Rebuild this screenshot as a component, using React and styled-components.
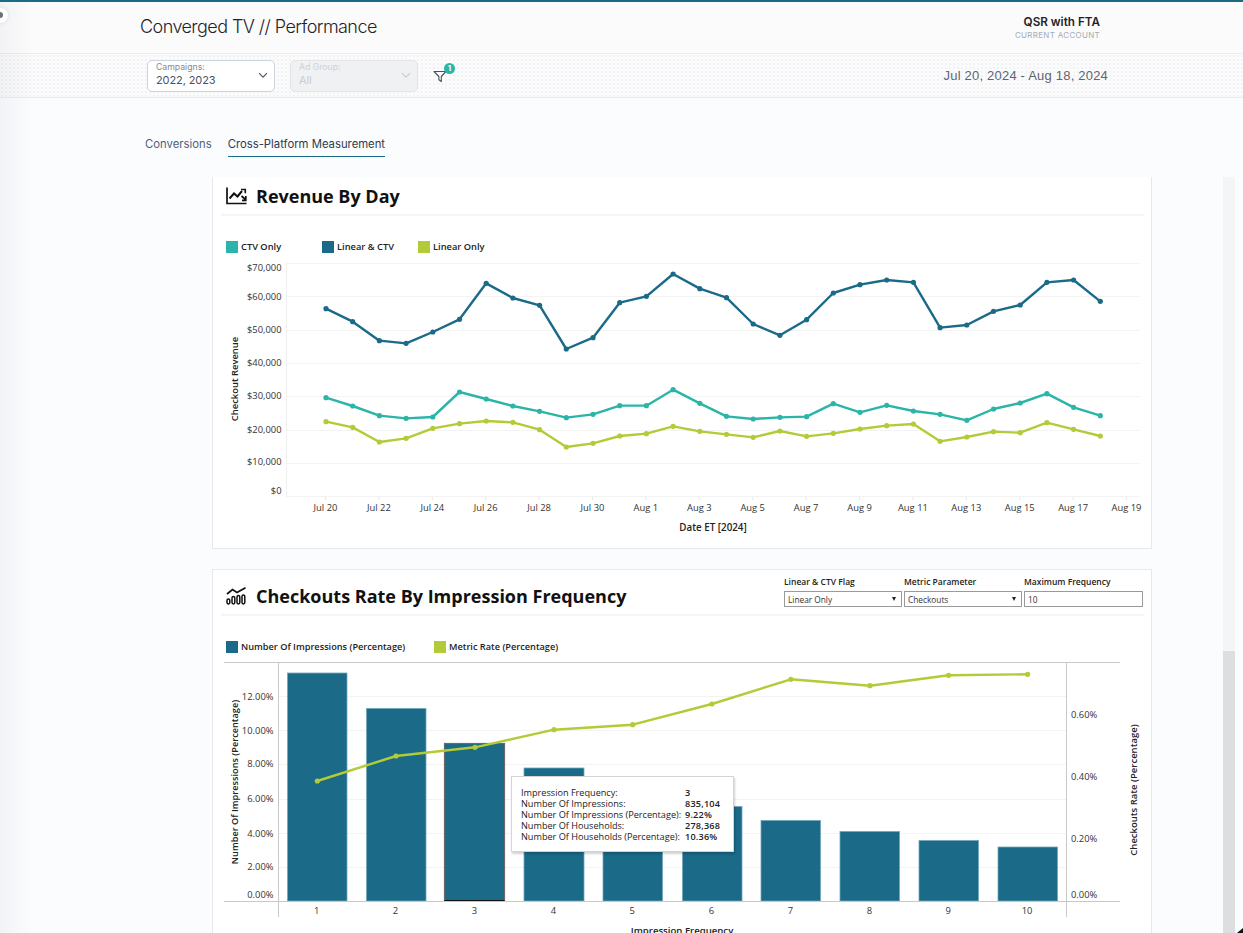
import React from "react";
import styled, { createGlobalStyle } from "styled-components";

const GlobalStyle = createGlobalStyle`
  html, body {
    margin: 0;
    padding: 0;
    height: 100%;
    overflow: hidden;
    background: #fbfcfe;
  }
  * { box-sizing: border-box; }
`;

const TEAL = "#2bb5a8";
const BLUE = "#1a6a88";
const LIME = "#b2cb36";
const CHART_FONT = '"Open Sans", "DejaVu Sans", sans-serif';

const Page = styled.div`
  position: relative;
  width: 1243px;
  height: 933px;
  overflow: hidden;
  display: flex;
  flex-direction: column;
  border-top: 2px solid ${BLUE};
  font-family: Inter, "Noto Sans", sans-serif;
  background: #fbfcfe;
`;

const SideShadow = styled.div`
  position: absolute;
  top: 0;
  bottom: 0;
  left: 0;
  width: 34px;
  background: linear-gradient(to right, rgba(40, 50, 70, 0.045), rgba(40, 50, 70, 0));
  pointer-events: none;
`;

const Knob = styled.div`
  position: absolute;
  left: -7px;
  top: 6px;
  width: 15px;
  height: 15px;
  border-radius: 50%;
  background: #fff;
  box-shadow: 0 0 4px rgba(0, 0, 0, 0.1);
  &::after {
    content: "";
    position: absolute;
    left: 4px;
    top: 4px;
    width: 6px;
    height: 6px;
    border-radius: 50%;
    background: #6b7078;
  }
`;

const Header = styled.header`
  height: 52px;
  flex: none;
  display: flex;
  align-items: center;
  justify-content: space-between;
  padding: 0 143px 0 140px;
  background: #fbfbfc;
  border-bottom: 1px solid #e9ecf0;
`;

const PageTitle = styled.h1`
  margin: 0 0 2px;
  font-size: 18px;
  font-weight: 300;
  letter-spacing: -0.56px;
  color: #1f2328;
`;

const Account = styled.div`
  display: flex;
  flex-direction: column;
  align-items: flex-end;
  margin-top: 1px;
`;

const AccountName = styled.div`
  font-size: 11.7px;
  line-height: 15px;
  font-weight: 600;
  color: #1f2328;
`;

const AccountLabel = styled.div`
  font-size: 8px;
  line-height: 11px;
  letter-spacing: 0.3px;
  color: #a4abb8;
`;

const FilterBar = styled.div`
  height: 44px;
  flex: none;
  display: flex;
  align-items: center;
  padding: 0 135px 0 147px;
  border-bottom: 1px solid #e9ecf0;
  background-color: #fbfbfc;
  background-image: radial-gradient(#f1f2f5 0.7px, transparent 0.8px);
  background-size: 4px 4px;
`;

const Select = styled.div`
  position: relative;
  width: 128px;
  height: 32px;
  margin-right: 15px;
  padding: 1px 8px;
  border-radius: 5px;
  border: 1px solid ${(p) => (p.$disabled ? "#e3e5e9" : "#ccd3dd")};
  background: ${(p) => (p.$disabled ? "#eff1f3" : "#fff")};
  color: ${(p) => (p.$disabled ? "#c8ccd3" : "#4a5266")};
`;

const SelectLabel = styled.div`
  font-size: 8.7px;
  line-height: 11px;
  color: ${(p) => (p.$disabled ? "#cdd1d8" : "#7f8897")};
`;

const SelectValue = styled.div`
  font-size: 11px;
  line-height: 15px;
  letter-spacing: -0.1px;
`;

const Chevron = styled.svg`
  position: absolute;
  right: 6px;
  top: 11px;
`;

const FilterIcon = styled.div`
  position: relative;
  width: 20px;
  height: 20px;
  margin-top: 2px;
`;

const Badge = styled.span`
  position: absolute;
  left: 11px;
  top: -4px;
  width: 11px;
  height: 11px;
  border-radius: 50%;
  background: ${TEAL};
  color: #fff;
  font-size: 8px;
  font-weight: 700;
  line-height: 11px;
  text-align: center;
`;

const DateRange = styled.div`
  margin-left: auto;
  font-family: "Liberation Sans", Arial, sans-serif;
  font-size: 13px;
  letter-spacing: 0.2px;
  color: #5f6570;
`;

const Tabs = styled.nav`
  height: 79px;
  flex: none;
  display: flex;
  gap: 16px;
  padding: 35px 0 0 145px;
`;

const Tab = styled.div`
  height: 24px;
  font-size: 11.3px;
  line-height: 22px;
  color: ${(p) => (p.$active ? "#2f3a4a" : "#4f5f78")};
  border-bottom: ${(p) => (p.$active ? `1px solid ${BLUE}` : "none")};
`;

const Body = styled.main`
  flex: 1;
  min-height: 0;
  display: flex;
  padding-left: 212px;
  overflow: hidden;
`;

const Cards = styled.div`
  width: 940px;
  flex: none;
  display: flex;
  flex-direction: column;
  gap: 20px;
`;

const Card = styled.section`
  flex: none;
  height: ${(p) => p.$height}px;
  background: #fff;
  border: 1px solid #e6e8ec;
  border-top: ${(p) => (p.$cut ? "none" : "1px solid #e6e8ec")};
  font-family: ${CHART_FONT};
`;

const CardHead = styled.div`
  height: ${(p) => p.$height}px;
  margin: 0 7px 0 8px;
  padding: ${(p) => p.$pad || 0}px 0 0 5px;
  display: flex;
  align-items: center;
  gap: 9px;
  border-bottom: 2px solid #f5f5f5;
`;

const CardTitle = styled.h2`
  margin: 0;
  flex: 1;
  font-size: 18px;
  font-weight: 700;
  color: #111;
  white-space: nowrap;
`;

const Params = styled.div`
  display: flex;
  gap: 2px;
  align-self: flex-start;
  margin: -3px 1px 0 0;
`;

const Param = styled.div`
  width: ${(p) => p.$width || 118}px;
`;

const ParamLabel = styled.div`
  font-size: 8.5px;
  line-height: 13px;
  font-weight: 600;
  color: #222;
  white-space: nowrap;
`;

const ParamBox = styled.div`
  height: 16px;
  margin-top: 3px;
  padding: 0 3px;
  display: flex;
  align-items: center;
  justify-content: space-between;
  font-size: 8.3px;
  color: #333;
  border: 1px solid #9a9a9a;
  background: #fff;
`;

const Arrow = styled.span`
  width: 0;
  height: 0;
  margin-right: 2px;
  border-left: 2.5px solid transparent;
  border-right: 2.5px solid transparent;
  border-top: 4px solid #222;
`;

const Legend = styled.div`
  display: flex;
  align-items: center;
  height: 12px;
  margin: ${(p) => p.$top}px 0 0 13px;
`;

const LegendItem = styled.div`
  display: flex;
  align-items: center;
  gap: 3px;
  width: ${(p) => p.$width}px;
  font-size: ${(p) => p.$size || 9.3}px;
  line-height: 11px;
  font-weight: 600;
  color: #222;
  white-space: nowrap;
`;

const Swatch = styled.span`
  width: 12px;
  height: 12px;
  transform: translateY(1px);
  background: ${(p) => p.$color};
`;

const ChartSvg = styled.svg`
  display: block;
  font-family: ${CHART_FONT};
`;

const ChartWrap = styled.div`
  position: relative;
  margin-top: ${(p) => p.$top}px;
`;

const Tooltip = styled.div`
  position: absolute;
  left: 298px;
  top: 116px;
  width: 223px;
  height: 76px;
  padding: 10px 9px;
  display: grid;
  grid-template-columns: 164px 1fr;
  grid-auto-rows: 11px;
  font-size: 9.15px;
  line-height: 11px;
  color: #222;
  background: #fff;
  border: 1px solid #d4d4d4;
  box-shadow: 1px 2px 2px rgba(0, 0, 0, 0.18);
  white-space: nowrap;
`;

const TipValue = styled.span`
  font-weight: 600;
  letter-spacing: 0.2px;
`;

const ScrollTrack = styled.div`
  width: 12px;
  margin-left: 71px;
  flex: none;
  display: flex;
  align-items: flex-end;
  background: #f5f5f5;
`;

const ScrollThumb = styled.div`
  width: 100%;
  height: 282px;
  background: #dedede;
`;

const CursorTip = styled.svg`
  position: absolute;
  right: 0;
  bottom: 0;
`;

const dayX = (i) => 326 + i * 26.7;
const fromZoom = (v) => 230 + v / 3;

const dark = [236, 275, 332, 340, 306, 268, 160, 204, 226, 357, 323, 218, 199, 132, 176, 203, 282, 316, 269, 189, 164, 150, 157, 293, 285, 244, 225, 157, 150, 214];
const teal = [503, 528, 557, 565, 561, 486, 507, 528, 544, 563, 553, 527, 527, 479, 520, 559, 567, 562, 560, 521, 547, 526, 543, 553, 571, 537, 519, 491, 532, 557];
const lime = [575, 592, 636, 625, 595, 581, 573, 577, 599, 651, 640, 618, 611, 589, 604, 613, 622, 603, 619, 610, 597, 587, 582, 634, 621, 605, 608, 578, 598, 618];

const revenueSeries = [
  { color: TEAL, values: teal },
  { color: BLUE, values: dark },
  { color: LIME, values: lime },
];

const revenueTicks = [
  ["$70,000", 268],
  ["$60,000", 297],
  ["$50,000", 330],
  ["$40,000", 363],
  ["$30,000", 396],
  ["$20,000", 430],
  ["$10,000", 462],
  ["$0", 491],
];

const dayLabels = ["Jul 20", "Jul 22", "Jul 24", "Jul 26", "Jul 28", "Jul 30", "Aug 1", "Aug 3", "Aug 5", "Aug 7", "Aug 9", "Aug 11", "Aug 13", "Aug 15", "Aug 17", "Aug 19"];

const revenueGrid = [263.5, 296.5, 330.5, 363.5, 396.5, 430.5, 463.5, 496.5];

const bars = [
  [287.5, 59.5, 673],
  [366.5, 59.5, 708.5],
  [444.5, 60, 743.5],
  [524, 60, 768],
  [603, 59.5, 796],
  [682.5, 59.5, 806.5],
  [761, 59.5, 820.5],
  [840, 59.5, 831.5],
  [919, 59.5, 840.5],
  [998, 59.5, 847],
];

const ratePoints = [
  [317.3, 781],
  [396, 756],
  [475, 747.3],
  [554, 729.7],
  [632.7, 724.7],
  [711.9, 704],
  [790.9, 679.3],
  [869.9, 685.7],
  [948.6, 675.3],
  [1027.6, 674.3],
];

const freqGrid = [696.5, 730.5, 764.5, 799.5, 833.5, 867.5];
const freqLeft = [
  ["12.00%", 697],
  ["10.00%", 731],
  ["8.00%", 764],
  ["6.00%", 799],
  ["4.00%", 834],
  ["2.00%", 867],
  ["0.00%", 895],
];
const freqRight = [
  ["0.60%", 715],
  ["0.40%", 777],
  ["0.20%", 839],
  ["0.00%", 895],
];

const tipRows = [
  ["Impression Frequency:", "3"],
  ["Number Of Impressions:", "835,104"],
  ["Number Of Impressions (Percentage):", "9.22%"],
  ["Number Of Households:", "278,368"],
  ["Number Of Households (Percentage):", "10.36%"],
];

const RevenueIcon = () => (
  <svg width="21" height="18" viewBox="0 0 21 18" fill="none" stroke="#111" strokeWidth="1.7">
    <path d="M1 0.5V16.5H20.5" />
    <path d="M3.5 11.5L8 6.5L11.5 9.5L16 4" strokeWidth="2" />
    <path d="M15 2.5H19.3V6.3" strokeWidth="1.6" />
    <path d="M15.5 9L19.5 12.5M19.8 9V13.4H16" strokeWidth="1.7" />
  </svg>
);

const FrequencyIcon = () => (
  <svg width="21" height="18" viewBox="0 0 21 18" fill="none" stroke="#111">
    <path d="M1 7L6.5 2.5L11 5.5L19.5 0.8" strokeWidth="1.8" />
    <rect x="1" y="12" width="2.8" height="5" rx="1.4" strokeWidth="1.5" />
    <rect x="6" y="9.5" width="2.8" height="7.5" rx="1.4" strokeWidth="1.5" />
    <rect x="11" y="8.5" width="2.8" height="8.5" rx="1.4" strokeWidth="1.5" />
    <rect x="16" y="8" width="2.8" height="9" rx="1.4" strokeWidth="1.5" />
  </svg>
);

const RevenueChart = () => (
  <ChartSvg width="938" height="286" viewBox="213 256 938 286">
    {revenueGrid.map((y) => (
      <line key={y} x1="286" x2="1140" y1={y} y2={y} stroke="#f3f3f3" />
    ))}
    <line x1="286.5" x2="286.5" y1="263" y2="497" stroke="#f0f0f0" />
    {revenueTicks.map(([label, y]) => (
      <text key={label} x="281.5" y={y + 3} textAnchor="end" fontSize="9.4" fill="#333">
        {label}
      </text>
    ))}
    {dayLabels.map((label, i) => (
      <g key={label}>
        <line x1={325.5 + i * 53.4} x2={325.5 + i * 53.4} y1="497" y2="500" stroke="#e8e8e8" />
        <text x={325.5 + i * 53.4} y="511" textAnchor="middle" fontSize="9.4" fill="#333">
          {label}
        </text>
      </g>
    ))}
    <text x="713" y="531" textAnchor="middle" fontSize="9.8" fontWeight="600" fill="#222">
      Date ET [2024]
    </text>
    <text transform="translate(238 379) rotate(-90)" textAnchor="middle" fontSize="9.4" fontWeight="600" fill="#222">
      Checkout Revenue
    </text>
    {revenueSeries.map(({ color, values }) => (
      <g key={color}>
        <polyline
          points={values.map((v, i) => `${dayX(i)},${fromZoom(v)}`).join(" ")}
          fill="none"
          stroke={color}
          strokeWidth="2.4"
          strokeLinejoin="round"
        />
        {values.map((v, i) => (
          <circle key={i} cx={dayX(i)} cy={fromZoom(v)} r="2.6" fill={color} />
        ))}
      </g>
    ))}
  </ChartSvg>
);

const FrequencyChart = () => (
  <ChartSvg width="938" height="280" viewBox="213 660 938 280">
    {freqGrid.map((y) => (
      <line key={y} x1="279" x2="1066" y1={y} y2={y} stroke="#f3f3f3" />
    ))}
    {bars.map(([x, w, y], i) => (
      <rect
        key={x}
        x={x}
        y={y}
        width={w}
        height={901 - y}
        fill={BLUE}
        stroke={i === 2 ? "#6a6a6a" : "#6fa9bb"}
        strokeWidth={i === 2 ? 1.2 : 0.8}
      />
    ))}
    <line x1="444.5" x2="504.5" y1="900.5" y2="900.5" stroke="#111" />
    <line x1="224" x2="1120" y1="662.5" y2="662.5" stroke="#c9c9c9" />
    <line x1="224" x2="1120" y1="901.5" y2="901.5" stroke="#c9c9c9" />
    <line x1="278.5" x2="278.5" y1="662" y2="917" stroke="#c9c9c9" />
    <line x1="1066.5" x2="1066.5" y1="662" y2="917" stroke="#c9c9c9" />
    {freqLeft.map(([label, y]) => (
      <text key={label} x="273.5" y={y + 3} textAnchor="end" fontSize="9.4" fill="#333">
        {label}
      </text>
    ))}
    {freqRight.map(([label, y]) => (
      <text key={label} x="1071" y={y + 3} fontSize="9.4" fill="#333">
        {label}
      </text>
    ))}
    {ratePoints.map(([x], i) => (
      <text key={x} x={x - 0.5} y="914" textAnchor="middle" fontSize="9.4" fill="#333">
        {i + 1}
      </text>
    ))}
    <polyline
      points={ratePoints.map(([x, y]) => `${x},${y}`).join(" ")}
      fill="none"
      stroke={LIME}
      strokeWidth="2.4"
      strokeLinejoin="round"
    />
    {ratePoints.map(([x, y]) => (
      <circle key={x} cx={x} cy={y} r="2.6" fill={LIME} />
    ))}
    <text x="682" y="934" textAnchor="middle" fontSize="9.6" fontWeight="600" fill="#222">
      Impression Frequency
    </text>
    <text transform="translate(238 782) rotate(-90)" textAnchor="middle" fontSize="9.2" fontWeight="600" fill="#222">
      Number Of Impressions (Percentage)
    </text>
    <text transform="translate(1137 790) rotate(-90)" textAnchor="middle" fontSize="9.5" fontWeight="600" fill="#222">
      Checkouts Rate (Percentage)
    </text>
  </ChartSvg>
);

const DownChevron = ({ color }) => (
  <Chevron width="10" height="7" viewBox="0 0 10 7" fill="none" stroke={color} strokeWidth="1.1">
    <path d="M1 1.2L5 5.2L9 1.2" />
  </Chevron>
);

const App = () => {
  return (
    <Page>
      <GlobalStyle />
      <Header>
        <PageTitle>Converged TV // Performance</PageTitle>
        <Account>
          <AccountName>QSR with FTA</AccountName>
          <AccountLabel>CURRENT ACCOUNT</AccountLabel>
        </Account>
      </Header>
      <FilterBar>
        <Select>
          <SelectLabel>Campaigns:</SelectLabel>
          <SelectValue>2022, 2023</SelectValue>
          <DownChevron color="#4a5266" />
        </Select>
        <Select $disabled>
          <SelectLabel $disabled>Ad Group:</SelectLabel>
          <SelectValue>All</SelectValue>
          <DownChevron color="#c8ccd3" />
        </Select>
        <FilterIcon>
          <svg width="14" height="14" viewBox="0 0 14 14" fill="none" stroke="#4a5260" strokeWidth="1.1">
            <path d="M1 2.5H13L8.3 7.5V12.6L5.9 10.8V7.5Z" strokeLinejoin="round" />
          </svg>
          <Badge>1</Badge>
        </FilterIcon>
        <DateRange>Jul 20, 2024 - Aug 18, 2024</DateRange>
      </FilterBar>
      <Tabs>
        <Tab>Conversions</Tab>
        <Tab $active>Cross-Platform Measurement</Tab>
      </Tabs>
      <Body>
        <Cards>
          <Card $cut $height={372}>
            <CardHead $height={39}>
              <RevenueIcon />
              <CardTitle>Revenue By Day</CardTitle>
            </CardHead>
            <Legend $top={24}>
              <LegendItem $width={96}>
                <Swatch $color={TEAL} />
                CTV Only
              </LegendItem>
              <LegendItem $width={96}>
                <Swatch $color={BLUE} />
                Linear &amp; CTV
              </LegendItem>
              <LegendItem $width={96}>
                <Swatch $color={LIME} />
                Linear Only
              </LegendItem>
            </Legend>
            <ChartWrap $top={4}>
              <RevenueChart />
            </ChartWrap>
          </Card>
          <Card $height={400}>
            <CardHead $height={46} $pad={8}>
              <FrequencyIcon />
              <CardTitle>Checkouts Rate By Impression Frequency</CardTitle>
              <Params>
                <Param>
                  <ParamLabel>Linear &amp; CTV Flag</ParamLabel>
                  <ParamBox>
                    Linear Only
                    <Arrow />
                  </ParamBox>
                </Param>
                <Param>
                  <ParamLabel>Metric Parameter</ParamLabel>
                  <ParamBox>
                    Checkouts
                    <Arrow />
                  </ParamBox>
                </Param>
                <Param $width={119}>
                  <ParamLabel>Maximum Frequency</ParamLabel>
                  <ParamBox>10</ParamBox>
                </Param>
              </Params>
            </CardHead>
            <Legend $top={24}>
              <LegendItem $width={208} $size={9.2}>
                <Swatch $color={BLUE} />
                Number Of Impressions (Percentage)
              </LegendItem>
              <LegendItem $width={160} $size={9.2}>
                <Swatch $color={LIME} />
                Metric Rate (Percentage)
              </LegendItem>
            </Legend>
            <ChartWrap $top={8}>
              <FrequencyChart />
              <Tooltip>
                {tipRows.map(([label, value]) => (
                  <React.Fragment key={label}>
                    <span>{label}</span>
                    <TipValue>{value}</TipValue>
                  </React.Fragment>
                ))}
              </Tooltip>
            </ChartWrap>
          </Card>
        </Cards>
        <ScrollTrack>
          <ScrollThumb />
        </ScrollTrack>
      </Body>
      <SideShadow />
      <Knob />
      <CursorTip width="6" height="5" viewBox="0 0 6 5">
        <path d="M0 5L6 0V5Z" fill="#111" />
      </CursorTip>
    </Page>
  );
};

export default App;
